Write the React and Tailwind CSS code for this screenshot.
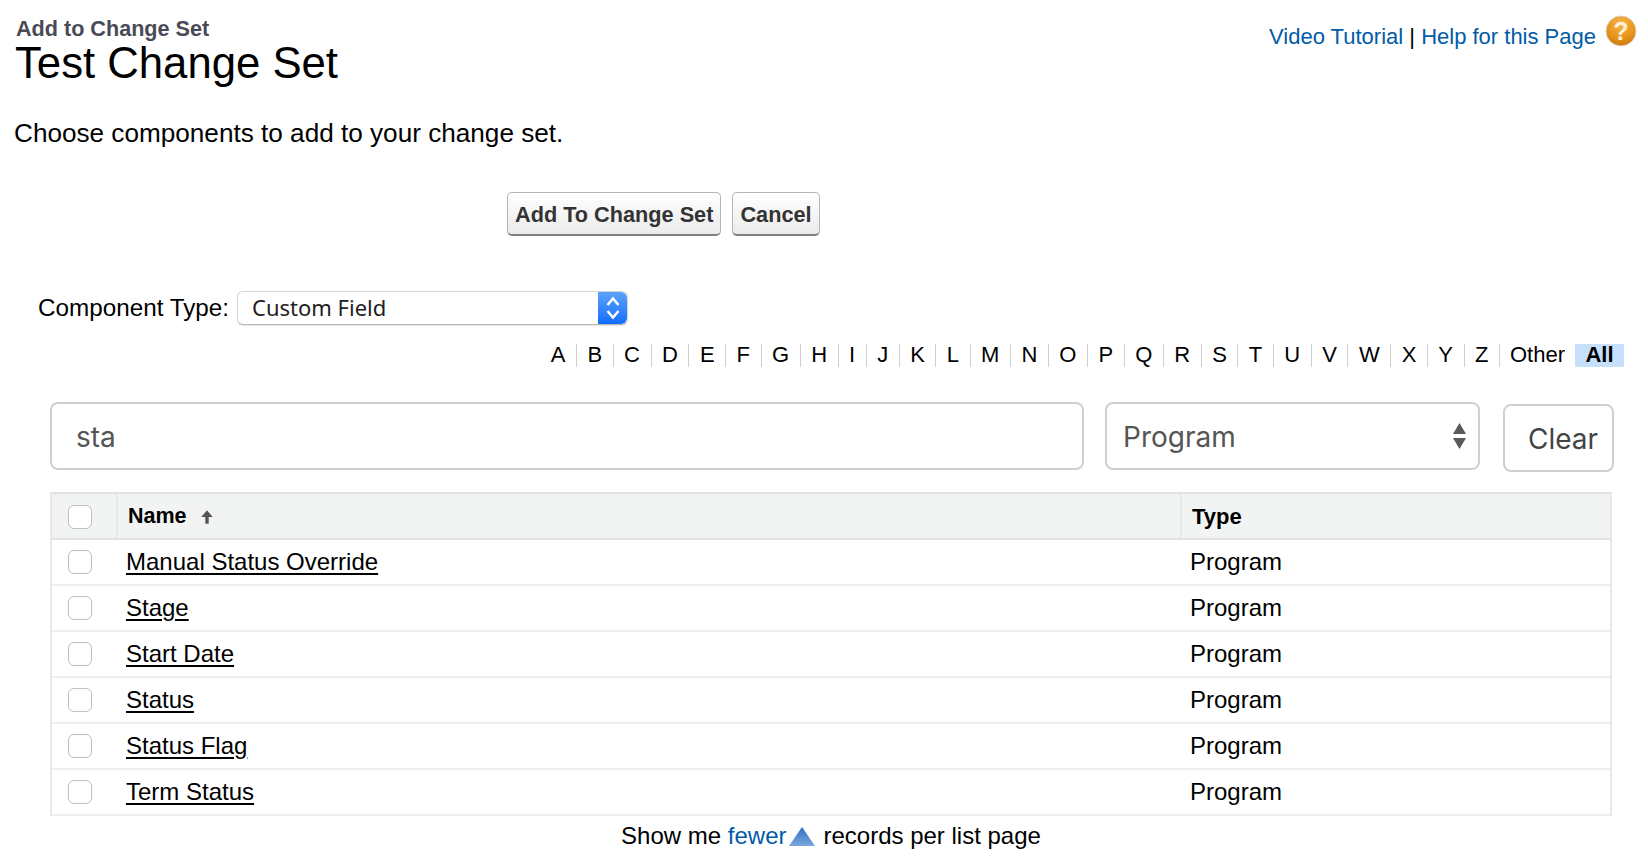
const LETTERS = 'ABCDEFGHIJKLMNOPQRSTUVWXYZ'.split('');
const ROWS = ['Manual Status Override', 'Stage', 'Start Date', 'Status', 'Status Flag', 'Term Status'];

function HelpIcon() {
  return (
    <svg width="32" height="32" viewBox="0 0 32 32" className="shrink-0">
      <defs>
        <radialGradient id="help-orb" cx="50%" cy="25%" r="80%">
          <stop offset="0%" stopColor="#f6b54a" />
          <stop offset="60%" stopColor="#e8941a" />
          <stop offset="100%" stopColor="#c4720c" />
        </radialGradient>
      </defs>
      <circle cx="16" cy="16" r="15" fill="url(#help-orb)" stroke="#d8d2c4" strokeWidth="1" />
      <text x="16" y="25" textAnchor="middle" fontSize="25" fontWeight="700" fill="#fdf1d8" fontFamily="Liberation Sans, sans-serif">?</text>
    </svg>
  );
}

function Checkbox() {
  return <span className="block h-6 w-6 rounded-md border border-[#bdbfc1] bg-white" />;
}

function Stepper() {
  return (
    <span className="flex h-full w-[29px] items-center justify-center rounded-r-md bg-gradient-to-b from-[#5aa2fc] to-[#0f6cff]">
      <svg width="16" height="26" viewBox="0 0 16 26" fill="none" stroke="#ffffff" strokeWidth="2.5">
        <path d="M2.5 10 8 3.5 13.5 10" />
        <path d="M2.5 16 8 22.5 13.5 16" />
      </svg>
    </span>
  );
}

export default function App() {
  return (
    <div className="h-[860px] w-[1648px] overflow-hidden bg-white font-['Liberation_Sans',Arial,sans-serif] text-black">
      {/* page title + help links */}
      <div className="flex h-[113px] items-start justify-between pl-[15px] pr-[11px]">
        <div className="pt-[16px]">
          <div className="pl-px text-[21.6px] font-bold leading-[26px] text-[#4a4a56]">Add to Change Set</div>
          <h1 className="text-[43.7px] leading-[42px]">Test Change Set</h1>
        </div>
        <div className="flex items-start gap-[9px] pt-[15px]">
          <div className="pt-[8px] text-[22px] leading-[28px]">
            <a className="text-[#015ba7]">Video Tutorial</a> | <a className="text-[#015ba7]">Help for this Page</a>
          </div>
          <HelpIcon />
        </div>
      </div>

      <p className="h-[79px] pl-[14px] text-[26.15px] leading-[40px]">Choose components to add to your change set.</p>

      <div className="flex h-[99px] items-start gap-[11px] pl-[507px]">
        <button className="h-[44px] rounded-[5px] border border-[#b5b5b5] border-b-2 border-b-[#7f7f7f] bg-gradient-to-b from-white to-[#ebebeb] px-[7px] pt-[3px] text-[21.7px] font-bold text-[#333333]">Add To Change Set</button>
        <button className="h-[44px] rounded-[5px] border border-[#b5b5b5] border-b-2 border-b-[#7f7f7f] bg-gradient-to-b from-white to-[#ebebeb] px-[7px] pt-[3px] text-[21.7px] font-bold text-[#333333]">Cancel</button>
      </div>

      <div className="flex h-[36px] items-start pl-[38px]">
        <span className="w-[199px] text-[24.25px] leading-[34px]">Component Type:</span>
        <div className="flex h-[34px] w-[391px] items-center justify-between rounded-md border border-[#d5d5d5] border-b-[#b9b9b9] bg-white shadow-[0_1px_1px_rgba(0,0,0,0.1)]">
          <span className="pb-[2px] pl-[14px] font-['Noto_Sans',sans-serif] text-[22px] text-[#222222]">Custom Field</span>
          <Stepper />
        </div>
      </div>

      <div className="mt-[15px] flex h-[26px] items-center justify-end pr-[24px] text-[22px] leading-[22px]">
        {LETTERS.map((l) => (
          <span key={l} className="flex h-[23px] items-center border-r border-[#cfcfcf] px-[10.5px]">{l}</span>
        ))}
        <span className="flex h-[23px] items-center px-[10px]">Other</span>
        <span className="flex h-[23px] w-[49px] items-center justify-center bg-[#c6e0fb] font-bold">All</span>
      </div>

      {/* filter row */}
      <div className="mt-[34px] flex items-start pl-[50px] font-['Inter',sans-serif] text-[28px]">
        <div className="flex h-[68px] w-[1034px] items-center rounded-lg border-2 border-[#d0d0d0] bg-white pl-[24px] pt-[1px] text-[#555555]">sta</div>
        <div className="ml-[21px] flex h-[68px] w-[375px] items-center justify-between rounded-lg border-2 border-[#d0d0d0] bg-white pl-[16px] pr-[12px] pt-[1px] text-[#555555]">
          <span>Program</span>
          <svg width="13" height="26" viewBox="0 0 13 26" fill="#5a5a5a" className="-mt-[1px]">
            <path d="M6.5 0 13 11H0Z" />
            <path d="M0 15H13L6.5 26Z" />
          </svg>
        </div>
        <div className="ml-[23px] mt-[2px] flex h-[68px] w-[111px] items-center justify-center rounded-lg border-2 border-[#d0d0d0] bg-white pl-[9px] pt-[1px] text-[#444444]">Clear</div>
      </div>

      {/* results */}
      <div className="ml-[50px] mt-[20px] w-[1562px] border-x-2 border-[#e6e8ea]">
        <div className="flex h-[48px] border-y-2 border-[#e0e3e5] bg-[#f2f3f3]">
          <div className="flex w-[66px] items-center justify-start border-r-2 border-[#e6e8ea] pl-[16px] pt-[2px]"><Checkbox /></div>
          <div className="flex w-[1064px] items-center gap-[13px] border-r-2 border-[#e6e8ea] pl-[10px] pt-[1px] text-[21.5px] font-bold">
            Name
            <svg width="14" height="16" viewBox="0 0 12 14" fill="#555555"><path d="M6 1 11 7H7.5V13H4.5V7H1Z" /></svg>
          </div>
          <div className="flex items-center pl-[10px] pt-[1px] text-[22px] font-bold">Type</div>
        </div>
        {ROWS.map((name) => (
          <div key={name} className="flex h-[46px] border-b-2 border-[#eceef0]">
            <div className="flex w-[66px] items-center justify-start pl-[16px]"><Checkbox /></div>
            <div className="flex w-[1066px] items-center pl-[8px] text-[24px]">
              <a className="underline decoration-2 underline-offset-[3px]">{name}</a>
            </div>
            <div className="flex items-center pl-[6px] text-[24px]">Program</div>
          </div>
        ))}
      </div>

      <div className="mt-[4px] flex items-center justify-center pl-[14px] text-[24px] leading-[32px]">
        Show me&nbsp;<a className="text-[#015ba7]">fewer</a>
        <svg width="26" height="19" viewBox="0 0 26 19" className="ml-[3px] mr-[8px]">
          <defs>
            <linearGradient id="fewer-tri" x1="0" y1="0" x2="0" y2="1">
              <stop offset="0%" stopColor="#2f6fc0" />
              <stop offset="100%" stopColor="#7ba7dc" />
            </linearGradient>
          </defs>
          <path d="M13 0 26 19H0Z" fill="url(#fewer-tri)" />
        </svg>
        records per list page
      </div>
    </div>
  );
}
